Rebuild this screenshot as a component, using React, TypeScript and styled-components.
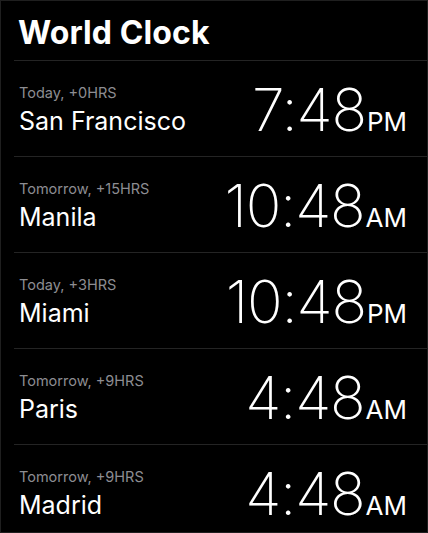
import React from "react";
import styled, { createGlobalStyle } from "styled-components";

const Global = createGlobalStyle`
  html, body { margin: 0; padding: 0; background: #000; }
  body { font-family: Inter, "Noto Sans", sans-serif; }
`;

const Screen = styled.div`
  width: 428px;
  height: 533px;
  box-sizing: border-box;
  background: #000;
  border: 1px solid #1f1f1f;
  overflow: hidden;
  display: flex;
  flex-direction: column;
`;

const Title = styled.h1`
  margin: 0;
  flex-shrink: 0;
  box-sizing: border-box;
  padding: 13px 0 0 17px;
  height: 59px;
  font-size: 32px;
  font-weight: 700;
  color: #fff;
  letter-spacing: 0.1px;
  line-height: 37px;
`;

const List = styled.div`
  margin-left: 13px;
  flex-shrink: 0;
  display: flex;
  flex-direction: column;
`;

const Row = styled.div`
  height: 96px;
  flex-shrink: 0;
  box-sizing: border-box;
  border-top: 1px solid #242424;
  display: flex;
  align-items: flex-end;
  justify-content: space-between;
  padding: 0 20px 20px 5px;
`;

const Info = styled.div`
  display: flex;
  flex-direction: column;
`;

const Offset = styled.div`
  font-size: 14.5px;
  line-height: 18px;
  color: #8d8d92;
  font-weight: 400;
`;

const City = styled.div`
  font-size: 25px;
  line-height: 30px;
  color: #fff;
  font-weight: 400;
  margin-top: 4px;
`;

const Time = styled.div`
  display: flex;
  align-items: baseline;
  color: #fff;
  line-height: 1;
  margin-bottom: -3px;
`;

const Digits = styled.span`
  font-size: 59px;
  font-weight: 200;
  letter-spacing: -1.2px;
`;

const Meridiem = styled.span`
  font-size: 26px;
  font-weight: 400;
  margin-left: 1px;
`;

const clocks = [
  { offset: "Today, +0HRS", city: "San Francisco", time: "7:48", ampm: "PM" },
  { offset: "Tomorrow, +15HRS", city: "Manila", time: "10:48", ampm: "AM" },
  { offset: "Today, +3HRS", city: "Miami", time: "10:48", ampm: "PM" },
  { offset: "Tomorrow, +9HRS", city: "Paris", time: "4:48", ampm: "AM" },
  { offset: "Tomorrow, +9HRS", city: "Madrid", time: "4:48", ampm: "AM" },
];

export default function App() {
  return (
    <>
      <Global />
      <Screen>
        <Title>World Clock</Title>
        <List>
          {clocks.map((c, i) => (
            <Row key={i}>
              <Info>
                <Offset>{c.offset}</Offset>
                <City>{c.city}</City>
              </Info>
              <Time>
                <Digits>{c.time}</Digits>
                <Meridiem>{c.ampm}</Meridiem>
              </Time>
            </Row>
          ))}
        </List>
      </Screen>
    </>
  );
}
